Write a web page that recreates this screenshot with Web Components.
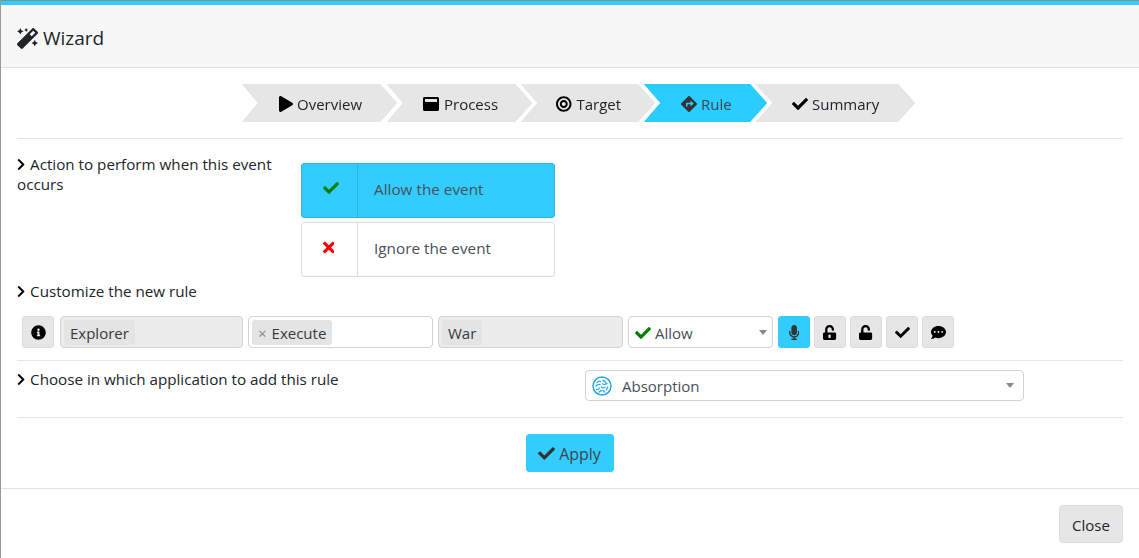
<!DOCTYPE html>
<html>
<head>
<meta charset="utf-8">
<title>Wizard</title>
<style>
  html, body { margin: 0; height: 100%; overflow: hidden; background: #fff; }
  body { font: 15px/24px "Open Sans", "Noto Sans", sans-serif; color: #212529; }
</style>
</head>
<body>
<wizard-modal>
  <fa-icon slot="title-icon" name="magic" size="21"></fa-icon>
  <span slot="title">Wizard</span>

  <step-bar>
    <wizard-step icon="play" width="155" over="0" z="5">Overview</wizard-step>
    <wizard-step icon="window" width="145" over="10" z="4" pad="36" gap="5">Process</wizard-step>
    <wizard-step icon="bullseye" width="134" over="11" z="3" pad="35" gap="5">Target</wizard-step>
    <wizard-step icon="directions" width="123" over="11" z="2" active>Rule</wizard-step>
    <wizard-step icon="check" width="160" over="12" z="1">Summary</wizard-step>
  </step-bar>
  <h-line style="margin-top:16px"></h-line>

  <form-row style="margin-top:24px" cols="284px 1fr">
    <field-label slot="label" style="margin-top:-9px">Action to perform when this event occurs</field-label>
    <choice-group>
      <choice-option icon="check" color="#008000" nudge="1" selected>Allow the event</choice-option>
      <choice-option icon="times" color="#ff0000" nudge="-1">Ignore the event</choice-option>
    </choice-group>
  </form-row>

  <field-label style="margin-top:4px">Customize the new rule</field-label>
  <rule-bar style="margin-top:15px">
    <icon-button icon="info"></icon-button>
    <tag-box width="183" style="margin-left:1px" disabled>Explorer</tag-box>
    <tag-box width="185" removable>Execute</tag-box>
    <tag-box width="185" disabled>War</tag-box>
    <select-box width="145" height="32" arrow-gap="5" gap="4" style="padding-top:1px">
      <fa-icon slot="icon" name="check" size="16" color="#008000"></fa-icon>Allow
    </select-box>
    <icon-button icon="microphone" active></icon-button>
    <icon-button icon="unlock-alt"></icon-button>
    <icon-button icon="unlock"></icon-button>
    <icon-button icon="check"></icon-button>
    <icon-button icon="comment"></icon-button>
  </rule-bar>
  <h-line style="margin-top:12px"></h-line>

  <form-row style="margin-top:9px" cols="568px 439px">
    <field-label slot="label" style="margin-top:-1px">Choose in which application to add this rule</field-label>
    <select-box width="439" height="31" arrow-gap="9">
      <app-logo slot="icon"></app-logo>Absorption
    </select-box>
  </form-row>
  <h-line style="margin-top:16px"></h-line>

  <action-row>
    <primary-button icon="check">Apply</primary-button>
  </action-row>

  <plain-button slot="footer">Close</plain-button>
</wizard-modal>

<script>
const ICONS = {
  magic: ['0 0 512 512', 'M224 96l16-32 32-16-32-16-16-32-16 32-32 16 32 16 16 32zM80 160l26.66-53.33L160 80l-53.34-26.67L80 0 53.34 53.33 0 80l53.34 26.67L80 160zm352 128l-26.66 53.33L352 368l53.34 26.67L432 448l26.66-53.33L512 368l-53.34-26.67L432 288zm70.62-193.77L417.77 9.38C411.53 3.12 403.34 0 395.15 0c-8.19 0-16.38 3.12-22.63 9.38L9.38 372.52c-12.5 12.5-12.5 32.76 0 45.25l84.85 84.85c6.25 6.25 14.44 9.37 22.62 9.37 8.19 0 16.38-3.12 22.63-9.37l363.14-363.15c12.5-12.48 12.5-32.75 0-45.24zM359.45 203.46l-50.91-50.91 86.6-86.6 50.91 50.91-86.6 86.6z'],
  play: ['0 0 448 512', 'M424.4 214.7L72.4 6.6C43.8-10.3 0 6.1 0 47.9V464c0 37.5 40.7 60.1 72.4 41.3l352-208c31.4-18.5 31.5-64.1 0-82.6z'],
  window: ['0 0 512 512', 'M464 32H48C21.5 32 0 53.5 0 80v352c0 26.5 21.5 48 48 48h416c26.5 0 48-21.5 48-48V80c0-26.5-21.5-48-48-48zm-16 160H64v-84c0-6.6 5.4-12 12-12h360c6.6 0 12 5.4 12 12v84z'],
  bullseye: ['0 0 496 512', 'M248 8C111.03 8 0 119.03 0 256s111.03 248 248 248 248-111.03 248-248S384.97 8 248 8zm0 432c-101.69 0-184-82.29-184-184 0-101.69 82.29-184 184-184 101.69 0 184 82.29 184 184 0 101.69-82.29 184-184 184zm0-312c-70.69 0-128 57.31-128 128s57.31 128 128 128 128-57.31 128-128-57.31-128-128-128zm0 192c-35.29 0-64-28.71-64-64s28.71-64 64-64 64 28.71 64 64-28.71 64-64 64z'],
  directions: ['0 0 512 512', 'M502.61 233.32L278.68 9.39c-12.52-12.52-32.83-12.52-45.36 0L9.39 233.32c-12.52 12.53-12.52 32.83 0 45.36l223.93 223.93c12.52 12.53 32.83 12.53 45.36 0l223.93-223.93c12.52-12.53 12.52-32.83 0-45.36zm-100.98 12.56l-84.21 77.73c-5.12 4.73-13.43 1.1-13.43-5.88V264h-96v64c0 4.42-3.58 8-8 8h-32c-4.42 0-8-3.58-8-8v-80c0-17.67 14.33-32 32-32h112v-53.73c0-6.97 8.3-10.61 13.43-5.88l84.21 77.73c3.43 3.17 3.43 8.59 0 11.76z'],
  check: ['0 0 512 512', 'M173.898 439.404l-166.4-166.4c-9.997-9.997-9.997-26.206 0-36.204l36.203-36.204c9.997-9.998 26.207-9.998 36.204 0L192 312.69 432.095 72.596c9.997-9.997 26.207-9.997 36.204 0l36.203 36.204c9.997 9.997 9.997 26.206 0 36.204l-294.4 294.401c-9.998 9.997-26.207 9.997-36.204-.001z'],
  times: ['0 0 352 512', 'M242.72 256l100.07-100.07c12.28-12.28 12.28-32.19 0-44.48l-22.24-22.24c-12.28-12.28-32.19-12.28-44.48 0L176 189.28 75.93 89.21c-12.28-12.28-32.19-12.28-44.48 0L9.21 111.45c-12.28 12.28-12.28 32.19 0 44.48L109.28 256 9.21 356.07c-12.28 12.28-12.28 32.19 0 44.48l22.24 22.24c12.28 12.28 32.2 12.28 44.48 0L176 322.72l100.07 100.07c12.28 12.28 32.2 12.28 44.48 0l22.24-22.24c12.28-12.28 12.28-32.19 0-44.48L242.72 256z'],
  chevron: ['0 0 320 512', 'M285.476 272.971L91.132 467.314c-9.373 9.373-24.569 9.373-33.941 0l-22.667-22.667c-9.357-9.357-9.375-24.522-.04-33.901L188.505 256 34.484 101.255c-9.335-9.379-9.317-24.544.04-33.901l22.667-22.667c9.373-9.373 24.569-9.373 33.941 0L285.475 239.03c9.373 9.372 9.373 24.568.001 33.941z'],
  info: ['0 0 512 512', 'M256 8C119.043 8 8 119.083 8 256c0 136.997 111.043 248 248 248s248-111.003 248-248C504 119.083 392.957 8 256 8zm0 110c23.196 0 42 18.804 42 42s-18.804 42-42 42-42-18.804-42-42 18.804-42 42-42zm56 254c0 6.627-5.373 12-12 12h-88c-6.627 0-12-5.373-12-12v-24c0-6.627 5.373-12 12-12h12v-64h-12c-6.627 0-12-5.373-12-12v-24c0-6.627 5.373-12 12-12h64c6.627 0 12 5.373 12 12v100h12c6.627 0 12 5.373 12 12v24z'],
  microphone: ['0 0 352 512', 'M176 352c53.02 0 96-42.98 96-96V96c0-53.02-42.98-96-96-96S80 42.98 80 96v160c0 53.02 42.98 96 96 96zm160-160h-16c-8.84 0-16 7.16-16 16v48c0 74.8-64.5 134.82-140.79 127.38C96.71 376.89 48 317.11 48 250.3V208c0-8.84-7.16-16-16-16H16c-8.84 0-16 7.16-16 16v40.16c0 89.64 63.97 169.55 152 181.69V464H96c-8.84 0-16 7.16-16 16v16c0 8.84 7.16 16 16 16h160c8.84 0 16-7.16 16-16v-16c0-8.84-7.16-16-16-16h-56v-33.77C285.71 418.47 352 344.9 352 256v-48c0-8.84-7.16-16-16-16z'],
  'unlock-alt': ['0 0 448 512', 'M400 256H152V152.9c0-39.6 31.7-72.5 71.3-72.9 40-.4 72.7 32.1 72.7 72v16c0 13.3 10.7 24 24 24h32c13.3 0 24-10.7 24-24v-16C376 68 307.5-.3 223.5 0 139.5.3 72 69.5 72 153.5V256H48c-26.5 0-48 21.5-48 48v160c0 26.5 21.5 48 48 48h352c26.5 0 48-21.5 48-48V304c0-26.5-21.5-48-48-48zM264 408c0 22.1-17.9 40-40 40s-40-17.9-40-40v-48c0-22.1 17.9-40 40-40s40 17.9 40 40v48z'],
  unlock: ['0 0 448 512', 'M400 256H152V152.9c0-39.6 31.7-72.5 71.3-72.9 40-.4 72.7 32.1 72.7 72v16c0 13.3 10.7 24 24 24h32c13.3 0 24-10.7 24-24v-16C376 68 307.5-.3 223.5 0 139.5.3 72 69.5 72 153.5V256H48c-26.5 0-48 21.5-48 48v160c0 26.5 21.5 48 48 48h352c26.5 0 48-21.5 48-48V304c0-26.5-21.5-48-48-48z'],
  comment: ['0 0 512 512', 'M256 32C114.6 32 0 125.1 0 240c0 49.6 21.4 95 57 130.7C44.5 421.1 2.7 466 2.2 466.5c-2.2 2.3-2.8 5.7-1.5 8.7S4.8 480 8 480c66.3 0 116-31.8 140.6-51.4 32.7 12.3 69 19.4 107.4 19.4 141.4 0 256-93.1 256-208S397.4 32 256 32zM128 272c-17.7 0-32-14.3-32-32s14.3-32 32-32 32 14.3 32 32-14.3 32-32 32zm128 0c-17.7 0-32-14.3-32-32s14.3-32 32-32 32 14.3 32 32-14.3 32-32 32zm128 0c-17.7 0-32-14.3-32-32s14.3-32 32-32 32 14.3 32 32-14.3 32-32 32z']
};

// small helper, every element just sets its shadow html once
class Base extends HTMLElement {
  constructor() {
    super();
    this.attachShadow({ mode: 'open' });
  }
  connectedCallback() {
    this.shadowRoot.innerHTML = this.render();
  }
  num(name, fallback) {
    return this.hasAttribute(name) ? Number(this.getAttribute(name)) : fallback;
  }
}

class FaIcon extends Base {
  render() {
    const [box, d] = ICONS[this.getAttribute('name')];
    const h = this.num('size', 16);
    const color = this.getAttribute('color') || 'currentColor';
    const w = h * box.split(' ')[2] / 512;
    return `<style>:host { display: inline-flex; flex: none; } svg { display: block; }</style>
      <svg width="${w}" height="${h}" viewBox="${box}"><path fill="${color}" d="${d}"/></svg>`;
  }
}

class WizardModal extends Base {
  render() {
    return `<style>
      :host { display: flex; flex-direction: column; height: 558px; box-sizing: border-box;
        border-top: 1px solid #8a8f93; border-left: 1px solid #9a9a9a; }
      .bar { height: 4px; background: #33ccff; flex: none; }
      header { height: 63px; box-sizing: border-box; display: flex; align-items: center; gap: 5px;
        padding: 4px 16px 0; background: #f7f7f7; border-bottom: 1px solid #dee2e6;
        font-size: 19px; color: #212529; flex: none; }
      .body { padding: 16px 16px 0; height: 420px; box-sizing: border-box; flex: none; }
      footer { flex: 1; border-top: 1px solid #dee2e6; display: flex; justify-content: flex-end;
        align-items: flex-start; padding: 16px 16px 0 0; }
    </style>
    <div class="bar"></div>
    <header><slot name="title-icon"></slot><slot name="title"></slot></header>
    <div class="body"><slot></slot></div>
    <footer><slot name="footer"></slot></footer>`;
  }
}

class StepBar extends Base {
  render() {
    return `<style>:host { display: flex; justify-content: flex-start; padding-left: 225px; height: 38px; }</style><slot></slot>`;
  }
}

class WizardStep extends Base {
  render() {
    const active = this.hasAttribute('active');
    return `<style>
      :host { display: block; flex: none; width: ${this.num('width', 140)}px; height: 38px;
        margin-left: -${this.num('over', 0)}px; z-index: ${this.num('z', 1)};
        filter: drop-shadow(0 0 .5px ${active ? '#2bccff' : '#d8d8d8'}) drop-shadow(5px 0 0 #fff);
        font-size: 15px; color: ${active ? '#3c4650' : '#212529'}; }
      .shape { height: 100%; box-sizing: border-box; display: flex; align-items: center; gap: ${this.num('gap', 4)}px;
        padding: 2px 0 0 ${this.num('pad', 37)}px; background: ${active ? '#2bccff' : '#e6e6e6'};
        clip-path: polygon(0 0, calc(100% - 17px) 0, 100% 50%, calc(100% - 17px) 100%, 0 100%, 16px 50%); }
    </style>
    <div class="shape">
      <fa-icon name="${this.getAttribute('icon')}" size="16" ${active ? 'color="#333"' : 'color="#000"'}></fa-icon>
      <span><slot></slot></span>
    </div>`;
  }
}

class HLine extends Base {
  render() {
    return `<style>:host { display: block; height: 1px; background: #e4e6e8; }</style>`;
  }
}

class FormRow extends Base {
  render() {
    return `<style>:host { display: grid; grid-template-columns: ${this.getAttribute('cols')}; align-items: start; }</style>
      <slot name="label"></slot><slot></slot>`;
  }
}

class FieldLabel extends Base {
  render() {
    return `<style>
      :host { display: block; font-size: 15.2px; line-height: 20px; color: #212529; }
      fa-icon { vertical-align: -1px; margin-right: 1px; }
    </style>
    <div><fa-icon name="chevron" size="13" color="#000"></fa-icon> <slot></slot></div>`;
  }
}

class ChoiceGroup extends Base {
  render() {
    return `<style>:host { display: flex; flex-direction: column; gap: 4px; width: 254px; }</style><slot></slot>`;
  }
}

class ChoiceOption extends Base {
  render() {
    const on = this.hasAttribute('selected');
    const nudge = this.num('nudge', 0);
    return `<style>
      :host { display: flex; height: 55px; box-sizing: border-box; border-radius: 3px; font-size: 15.3px;
        border: 1px solid ${on ? '#2eb4e0' : '#dcdcdc'}; background: ${on ? '#33ccff' : '#fff'}; color: #495057; }
      .i { width: 56px; flex: none; display: flex; align-items: center; justify-content: center; padding-bottom: 5px;
        box-sizing: border-box; border-right: 1px solid ${on ? '#2eb4e0' : '#dcdcdc'}; }
      fa-icon { margin-left: ${nudge * 2}px; }
      .t { padding: 0 0 4px 16px; display: flex; align-items: center; }
    </style>
    <div class="i"><fa-icon name="${this.getAttribute('icon')}" size="${on ? 16 : 17}" color="${this.getAttribute('color')}"></fa-icon></div>
    <div class="t"><slot></slot></div>`;
  }
}

class RuleBar extends Base {
  render() {
    return `<style>:host { display: flex; gap: 5px; padding-left: 5px; height: 32px; } ::slotted(icon-button:nth-last-child(-n+4)) { margin-left: -1px; }</style><slot></slot>`;
  }
}

class IconButton extends Base {
  render() {
    const on = this.hasAttribute('active');
    const icon = this.getAttribute('icon');
    return `<style>
      :host { display: flex; align-items: center; justify-content: center; flex: none; width: 32px; height: 32px;
        box-sizing: border-box; border-radius: 3px; border: 1px solid ${on ? '#33ccff' : '#dcdcdc'};
        background: ${on ? '#33ccff' : '#e6e6e6'}; }
    </style>
    <fa-icon name="${icon}" size="15" color="${on ? '#333' : '#000'}"></fa-icon>`;
  }
}

class TagBox extends Base {
  render() {
    const off = this.hasAttribute('disabled');
    const x = this.hasAttribute('removable') ? '<span class="x">×</span>' : '';
    return `<style>
      :host { display: flex; align-items: center; flex: none; width: ${this.num('width', 180)}px; height: 32px;
        box-sizing: border-box; padding-left: 3px; border-radius: 4px; border: 1px solid #ced4da;
        background: ${off ? '#ececec' : '#fff'}; }
      .chip { display: flex; align-items: center; height: 25px; box-sizing: border-box; padding: 1px 6px 0;
        border-radius: 3px; background: #e4e4e4; font-size: 15px; color: #343a40; }
      .x { color: #888; margin-right: 5px; font-size: 15px; }
    </style>
    <div class="chip">${x}<slot></slot></div>`;
  }
}

class SelectBox extends Base {
  render() {
    return `<style>
      :host { display: flex; align-items: center; gap: ${this.num('gap', 5)}px; flex: none;
        width: ${this.num('width', 145)}px; height: ${this.num('height', 32)}px; box-sizing: border-box;
        padding-left: 6px; border-radius: 4px; border: 1px solid #ced4da; background: #fff;
        font-size: 15px; color: #495057; }
      .arrow { margin-left: auto; margin-right: ${this.num('arrow-gap', 5)}px; width: 0; height: 0;
        border-left: 4px solid transparent; border-right: 4px solid transparent; border-top: 5px solid #888; }
    </style>
    <slot name="icon"></slot><span><slot></slot></span><span class="arrow"></span>`;
  }
}

class AppLogo extends Base {
  render() {
    return `<style>:host { display: block; flex: none; width: 20px; height: 20px; margin-right: 5px; } svg { display: block; }</style>
    <svg width="20" height="20" viewBox="0 0 20 20" fill="none" stroke="#2aa9e0">
      <circle cx="10" cy="10" r="9" stroke-width="1.5"/>
      <path stroke-width="1.3" stroke-linecap="round" d="M5 6.5q2-2 3.5-1M11 4.5q2 .5 3 2M4 10q2-2 4-1.5M10.5 8q2 1 4.5-.5M4.5 13.5q2 .5 3-1.5M9.5 11q1.5 1.5 3.5 .5M15.8 11q-1 2-1.500 3M7 16q1.5-1.5 3-1.5M11.5 14.500q.5 1 1 1.5"/>
    </svg>`;
  }
}

class ActionRow extends Base {
  render() {
    return `<style>:host { display: flex; justify-content: center; margin-top: 16px; padding-right: 1px; }</style><slot></slot>`;
  }
}

class PrimaryButton extends Base {
  render() {
    return `<style>
      :host { display: flex; align-items: center; gap: 4px; width: 88px; height: 38px; box-sizing: border-box;
        padding-top: 1px; justify-content: center; border-radius: 3px; background: #33ccff; border: 1px solid #2bd0ff;
        font-size: 16px; color: #3c4650; }
    </style>
    <fa-icon name="${this.getAttribute('icon')}" size="17" color="#333"></fa-icon><span><slot></slot></span>`;
  }
}

class PlainButton extends Base {
  render() {
    return `<style>
      :host { display: flex; align-items: center; justify-content: center; width: 64px; height: 38px; box-sizing: border-box;
        padding-top: 1px; border-radius: 4px; background: #e6e6e6; border: 1px solid #dcdcdc; font-size: 15px; color: #212529; }
    </style><slot></slot>`;
  }
}

customElements.define('fa-icon', FaIcon);
customElements.define('wizard-modal', WizardModal);
customElements.define('step-bar', StepBar);
customElements.define('wizard-step', WizardStep);
customElements.define('h-line', HLine);
customElements.define('form-row', FormRow);
customElements.define('field-label', FieldLabel);
customElements.define('choice-group', ChoiceGroup);
customElements.define('choice-option', ChoiceOption);
customElements.define('rule-bar', RuleBar);
customElements.define('icon-button', IconButton);
customElements.define('tag-box', TagBox);
customElements.define('select-box', SelectBox);
customElements.define('app-logo', AppLogo);
customElements.define('action-row', ActionRow);
customElements.define('primary-button', PrimaryButton);
customElements.define('plain-button', PlainButton);
</script>
</body>
</html>
